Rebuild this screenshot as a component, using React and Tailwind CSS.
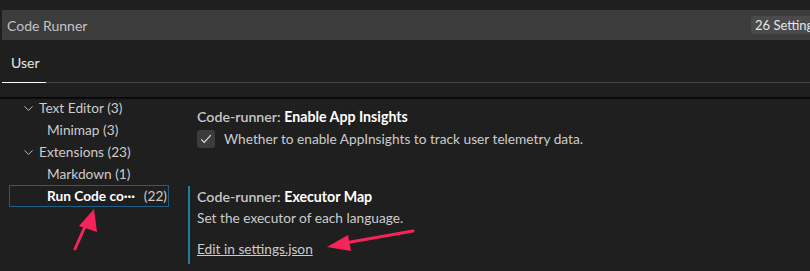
import { ChevronDown } from 'lucide-react'

const tree = [
  { label: 'Text Editor', count: '(3)', level: 1 },
  { label: 'Minimap', count: '(3)', level: 2 },
  { label: 'Extensions', count: '(23)', level: 1 },
  { label: 'Markdown', count: '(1)', level: 2 },
]

function Arrows() {
  return (
    <svg className="pointer-events-none absolute inset-0" width="810" height="271">
      <line x1="75" y1="249" x2="87" y2="222" stroke="#f5245b" strokeWidth="3" strokeLinecap="round" />
      <polygon points="94,209 97,232 79,226" fill="#f5245b" />
      <line x1="413" y1="231" x2="345" y2="243" stroke="#f5245b" strokeWidth="3" strokeLinecap="round" />
      <polygon points="327,247 348,235 351,251" fill="#f5245b" />
    </svg>
  )
}

export default function App() {
  return (
    <div className="relative h-[271px] w-[810px] overflow-hidden bg-[#1f1f1f] font-['Lato',sans-serif] text-[13.7px] text-[#cccccc]">
      <div className="pl-[2px] pt-[10px]">
        <div className="flex h-[30px] w-[880px] items-center bg-[#3c3c3c] pl-[5px] text-[14px] text-[#c4c4c4]">
          <span className="w-[744px] shrink-0">Code Runner</span>
          <span className="rounded-[3px] bg-[#4a4a4a] px-[4px] text-[13px] leading-[18px] text-[#e6e6e6]">26 Settings Found</span>
        </div>
        <div className="flex h-[43px] items-end border-b border-[#454545]">
          <div className="-mb-px w-[44px] border-b border-white pb-[9px] pl-[9px] text-[14px] text-[#e7e7e7]">User</div>
        </div>
      </div>
      <div className="mt-[14px] h-[3px] bg-gradient-to-b from-black to-transparent" />
      <div className="flex">
        <div className="ml-[9px] w-[160px] -mt-[3px]">
          {tree.map((t) => (
            <div key={t.label} className="flex h-[22px] items-center">
              {t.level === 1 ? (
                <>
                  <ChevronDown size={15} strokeWidth={1.5} className="ml-[12px] mr-[3px] text-[#c5c5c5]" />
                  <span>{t.label} {t.count}</span>
                </>
              ) : (
                <span className="ml-[38px]">{t.label} {t.count}</span>
              )}
            </div>
          ))}
          <div className="flex h-[22px] items-center border border-[#1c5f8a] pl-[37px] pr-[1px]">
            <span className="font-bold text-white">Run Code co···</span>
            <span className="ml-auto">(22)</span>
          </div>
        </div>
        <div className="ml-[19px] -mt-[3px] flex-1">
          <div className="pl-[9px] pt-[10px]">
            <div className="text-[14.2px] leading-[20px] text-[#c8c8c8]">
              <span className="font-semibold">Code-runner: </span>
              <span className="font-bold text-white">Enable App Insights</span>
            </div>
            <div className="mt-[2px] flex items-center">
              <div className="flex h-[18px] w-[18px] items-center justify-center rounded-[3px] bg-[#3c3c3c]">
                <svg width="14" height="14" viewBox="0 0 16 16" fill="none" stroke="#e0e0e0" strokeWidth="1.3">
                  <path d="M2.5 8.5 L6 12 L13.5 3.5" />
                </svg>
              </div>
              <span className="ml-[9px]">Whether to enable AppInsights to track user telemetry data.</span>
            </div>
          </div>
          <div className="mt-[36px] border-l-2 border-[#1c7fa6] pb-[5px] pl-[7px] pt-[1px]">
            <div className="text-[14.2px] leading-[20px] text-[#c8c8c8]">
              <span className="font-semibold">Code-runner: </span>
              <span className="font-bold text-white">Executor Map</span>
            </div>
            <div className="mt-[1px] leading-[20px]">Set the executor of each language.</div>
            <div className="mt-[11px] leading-[20px] underline">Edit in settings.json</div>
          </div>
        </div>
      </div>
      <Arrows />
    </div>
  )
}
